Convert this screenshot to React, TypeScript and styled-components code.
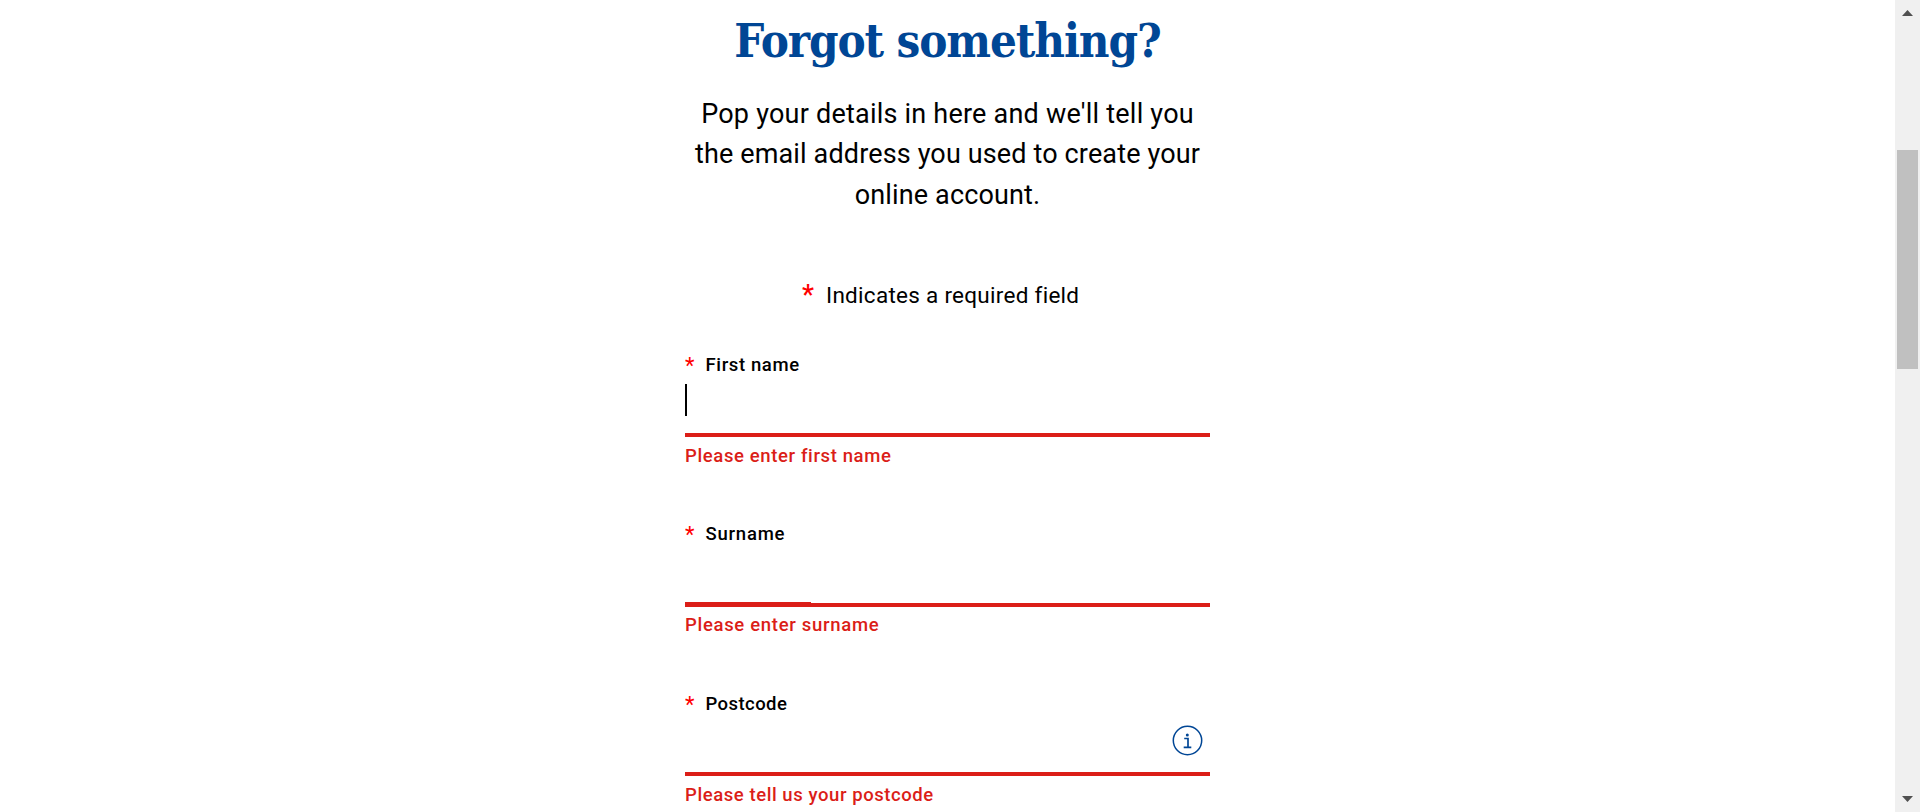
import React from "react";
import styled, { createGlobalStyle } from "styled-components";

const GlobalStyle = createGlobalStyle`
  * { box-sizing: border-box; }
  html, body { margin: 0; padding: 0; background: #fff; overflow: hidden; }
  body { font-family: Roboto, "Liberation Sans", sans-serif; color: #000; }
`;

const Page = styled.div`
  display: flex;
  height: 812px;
  overflow: hidden;
  background: #fff;
`;

const Main = styled.main`
  flex: 1;
  display: flex;
  justify-content: center;
`;

const FormColumn = styled.form`
  width: 525px;
  height: 812px;
  overflow: hidden;
`;

const Title = styled.h1`
  margin: 10px 0 0;
  height: 60px;
  font-family: "DejaVu Serif Condensed", "DejaVu Serif", serif;
  font-stretch: condensed;
  font-size: 47px;
  line-height: 62px;
  font-weight: 700;
  letter-spacing: -1.1px;
  text-align: center;
  white-space: nowrap;
  color: #004695;
`;

const Intro = styled.p`
  margin: 23.5px 0 0;
  font-size: 27px;
  line-height: 40.5px;
  text-align: center;
  font-weight: 400;
`;

const Line = styled.span<{ $spacing: number }>`
  display: block;
  white-space: nowrap;
  letter-spacing: ${(p) => p.$spacing}px;
`;

const RequiredNote = styled.p`
  display: flex;
  gap: 13px;
  margin: 61.5px 0 0;
  padding-left: 117px;
  height: 36px;
  font-size: 22.5px;
  line-height: 36px;
  font-weight: 400;
  white-space: nowrap;
`;

const Star = styled.span<{ $large?: boolean }>`
  display: block;
  width: ${(p) => (p.$large ? 11 : 9)}px;
  font-family: Roboto, sans-serif;
  font-size: ${(p) => (p.$large ? 27 : 22)}px;
  font-weight: ${(p) => (p.$large ? 500 : 400)};
  letter-spacing: 0;
  color: #ff0000;
`;

const Field = styled.div`
  height: 169.5px;
`;

const Fields = styled.div`
  padding-top: 38px;
`;

const Label = styled.label`
  display: flex;
  gap: 11.5px;
  height: 27px;
  font-size: 18.5px;
  line-height: 29px;
  font-weight: 500;
`;

const InputRow = styled.div`
  display: flex;
  align-items: flex-start;
  height: 55.5px;
  padding-right: 7px;
`;

const Caret = styled.span`
  width: 2px;
  height: 32px;
  margin-top: 6.5px;
  background: #000;
`;

const InfoIcon = styled.svg`
  display: block;
  width: 31px;
  height: 31px;
  margin: 8.5px 0 0 auto;
`;

const Rule = styled.div`
  position: relative;
  height: 4px;
  background: #db1e18;
`;

const RuleStep = styled.span`
  position: absolute;
  left: 0;
  top: -1px;
  width: 126px;
  height: 2px;
  background: #db1e18;
`;

const ErrorText = styled.div`
  margin-top: 4.5px;
  height: 27px;
  font-size: 18.5px;
  line-height: 29px;
  font-weight: 500;
  white-space: nowrap;
  color: #db1e18;
`;

const Scrollbar = styled.aside`
  display: flex;
  flex-direction: column;
  justify-content: space-between;
  align-items: center;
  width: 25px;
  height: 812px;
  padding: 10px 0;
  background: #f0f0f0;
`;

const Thumb = styled.div`
  width: 21px;
  height: 219px;
  margin: 134px 0 auto;
  background: #c0c0c0;
`;

const Arrow = styled.svg`
  display: block;
  width: 11px;
  height: 6px;
`;

type FieldData = {
  label: string;
  error: string;
  labelSpacing: number;
  errorSpacing: number;
  focused?: boolean;
  stepped?: boolean;
  info?: boolean;
};

const fields: FieldData[] = [
  { label: "First name", error: "Please enter first name", labelSpacing: 0.62, errorSpacing: 0.62, focused: true },
  { label: "Surname", error: "Please enter surname", labelSpacing: 0.78, errorSpacing: 0.69, stepped: true },
  { label: "Postcode", error: "Please tell us your postcode", labelSpacing: 0.43, errorSpacing: 0.57, info: true },
];

export default function App() {
  return (
    <Page>
      <GlobalStyle />
      <Main>
        <FormColumn>
          <Title>Forgot something?</Title>
          <Intro>
            <Line $spacing={0.22}>Pop your details in here and we'll tell you</Line>
            <Line $spacing={0.14}>the email address you used to create your</Line>
            <Line $spacing={0.15}>online account.</Line>
          </Intro>
          <RequiredNote>
            <Star $large>*</Star>
            <Line $spacing={0.28}>Indicates a required field</Line>
          </RequiredNote>
          <Fields>
            {fields.map((f) => (
              <Field key={f.label}>
                <Label>
                  <Star>*</Star>
                  <Line $spacing={f.labelSpacing}>{f.label}</Line>
                </Label>
                <InputRow>
                  {f.focused && <Caret />}
                  {f.info && (
                    <InfoIcon viewBox="0 0 31 31" fill="none" stroke="#004695">
                      <circle cx="15.5" cy="15.5" r="14.2" strokeWidth="1.5" />
                      <path d="M12.2 13.5H16v8.7M11.7 22.4h7.6" strokeWidth="1.7" />
                      <circle cx="15.3" cy="9.9" r="1.5" fill="#004695" stroke="none" />
                    </InfoIcon>
                  )}
                </InputRow>
                <Rule>{f.stepped && <RuleStep />}</Rule>
                <ErrorText>
                  <Line $spacing={f.errorSpacing}>{f.error}</Line>
                </ErrorText>
              </Field>
            ))}
          </Fields>
        </FormColumn>
      </Main>
      <Scrollbar>
        <Arrow viewBox="0 0 11 6">
          <path d="M5.5 0L11 6H0z" fill="#505050" />
        </Arrow>
        <Thumb />
        <Arrow viewBox="0 0 11 6">
          <path d="M5.5 6L11 0H0z" fill="#505050" />
        </Arrow>
      </Scrollbar>
    </Page>
  );
}
